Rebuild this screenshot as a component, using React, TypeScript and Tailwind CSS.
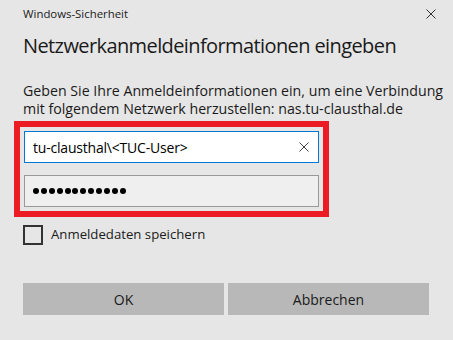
import React from 'react';

const font = { fontFamily: '"Open Sans", "Noto Sans", sans-serif' };

const CrossIcon = ({ size, stroke = 1 }: { size: number; stroke?: number }) => (
  <svg width={size} height={size} viewBox="0 0 10 10" fill="none" stroke="currentColor" strokeWidth={stroke}>
    <path d="M0.5 0.5L9.5 9.5M9.5 0.5L0.5 9.5" />
  </svg>
);

export default function App() {
  return (
    <div
      className="w-[453px] h-[340px] bg-[#e6e6e6] text-[#1a1a1a] flex flex-col overflow-hidden"
      style={font}
    >
      {/* Title bar */}
      <div className="h-[28px] flex items-center justify-between pl-[23px] pr-[17px]">
        <span className="text-[11.4px] text-[#1a1a1a]">Windows-Sicherheit</span>
        <span className="text-[#333]">
          <CrossIcon size={10} />
        </span>
      </div>

      {/* Heading */}
      <h1 className="pl-[23px] mt-[4px] text-[20px] leading-[28px] tracking-[-0.6px] text-[#1a1a1a]">
        Netzwerkanmeldeinformationen eingeben
      </h1>

      {/* Description */}
      <p className="pl-[23px] mt-[22px] text-[14.2px] leading-[18px] text-[#1a1a1a]">
        Geben Sie Ihre Anmeldeinformationen ein, um eine Verbindung
        <br />
        mit folgendem Netzwerk herzustellen: nas.tu-clausthal.de
      </p>

      {/* Highlighted credential fields */}
      <div className="ml-[14px] mt-[3px] w-[315px] border-[6px] border-[#ec1c24] p-[4px] flex flex-col gap-[12px]">
        <div className="h-[32px] bg-white border border-[#0078d7] flex items-center justify-between pl-[8px] pr-[9px]">
          <span className="text-[14px] text-black tracking-[-0.2px]">tu-clausthal\&lt;TUC-User&gt;</span>
          <span className="text-[#444]">
            <CrossIcon size={10} />
          </span>
        </div>
        <div className="h-[32px] bg-[#efefef] border border-[#999999] flex items-center gap-[1.9px] pl-[8px]">
          {Array.from({ length: 12 }).map((_, i) => (
            <span key={i} className="w-[6px] h-[6px] rounded-full bg-black" />
          ))}
        </div>
      </div>

      {/* Remember */}
      <label className="ml-[23px] mt-[8px] flex items-center gap-[8px]">
        <span className="w-[20px] h-[20px] border-2 border-[#333333]" />
        <span className="text-[13.2px] text-[#1a1a1a]">Anmeldedaten speichern</span>
      </label>

      {/* Buttons */}
      <div className="ml-[23px] mt-[38px] flex gap-[4px]">
        <button className="w-[201px] h-[32px] bg-[#b8b8b8] text-[14px] text-[#1a1a1a]">OK</button>
        <button className="w-[201px] h-[32px] bg-[#b8b8b8] text-[14px] text-[#1a1a1a]">Abbrechen</button>
      </div>
    </div>
  );
}
